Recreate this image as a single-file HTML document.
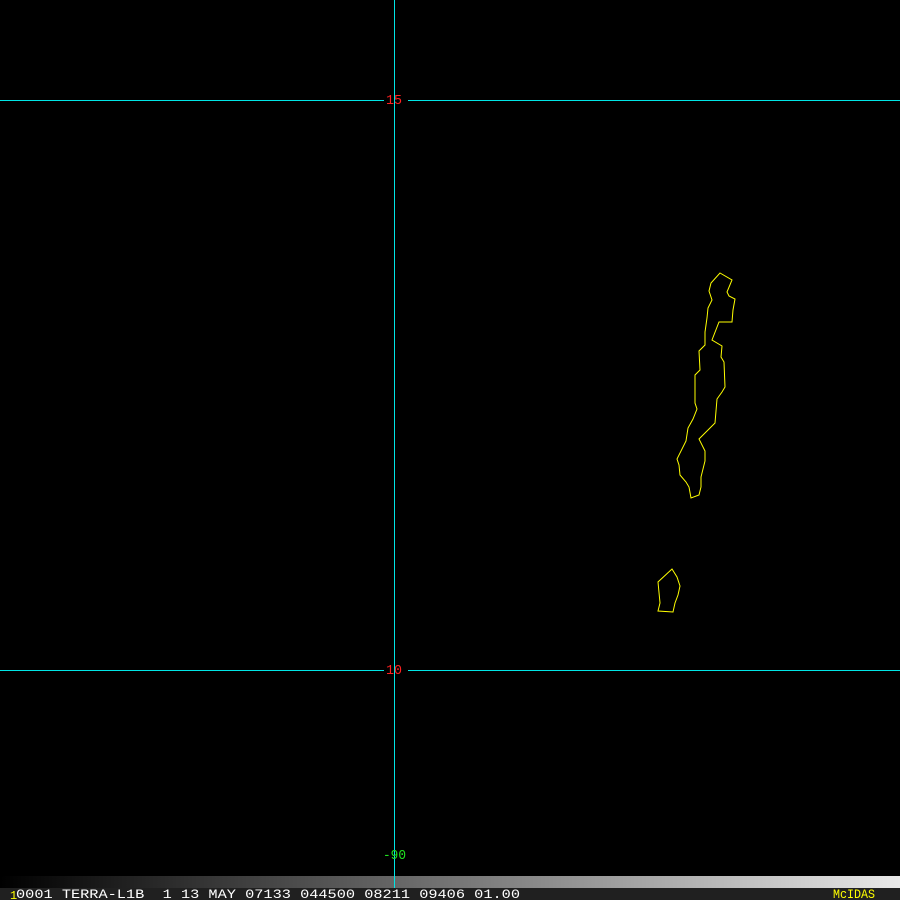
<!DOCTYPE html>
<html><head><style>
html,body{margin:0;padding:0;background:#000;width:900px;height:900px;overflow:hidden}
</style></head><body>
<svg width="900" height="900" viewBox="0 0 900 900" xmlns="http://www.w3.org/2000/svg" style="display:block">
<defs><linearGradient id="g" x1="0" x2="1" y1="0" y2="0"><stop offset="0" stop-color="#000"/><stop offset="1" stop-color="#e8e8e8"/></linearGradient></defs>
<rect width="900" height="900" fill="#000"/>
<rect x="0" y="876" width="900" height="12" fill="url(#g)"/>
<rect x="0" y="888" width="900" height="12" fill="#202020"/>
<g stroke="#00e5e5" stroke-width="1" shape-rendering="crispEdges">
<line x1="394.5" y1="0" x2="394.5" y2="888"/>
<line x1="0" y1="100.5" x2="384" y2="100.5"/>
<line x1="408" y1="100.5" x2="900" y2="100.5"/>
<line x1="0" y1="670.5" x2="384" y2="670.5"/>
<line x1="408" y1="670.5" x2="900" y2="670.5"/>
</g>
<g font-family="Liberation Mono, monospace" font-size="14">
<text x="386" y="104" fill="#ff2020" textLength="16" lengthAdjust="spacingAndGlyphs">15</text>
<text x="386" y="674" fill="#ff2020" textLength="16" lengthAdjust="spacingAndGlyphs">10</text>
<text x="383" y="859" fill="#20e020" textLength="23" lengthAdjust="spacingAndGlyphs">-90</text>
</g>
<g font-family="Liberation Mono, monospace" font-size="13">
<text x="10" y="899" fill="#ffff00" font-size="12">1</text>
<text x="16" y="898" fill="#ffffff" xml:space="preserve" textLength="504" lengthAdjust="spacingAndGlyphs">0001 TERRA-L1B  1 13 MAY 07133 044500 08211 09406 01.00</text>
<text x="833" y="898" fill="#ffff00" textLength="42" lengthAdjust="spacingAndGlyphs">McIDAS</text>
</g>
<g fill="none" stroke="#ffff00" stroke-width="1">
<polygon points="720,273 732,280 727,292 729,296 735,299 733,310 732,322 719,322 712,340 722,346 721,357 724,362 725,387 722,392 717,399 715,423 699,439 705,451 705,461 701,477 701,487 699,495 691,498 689,487 686,482 680,475 679,465 677,459 686,441 688,428 693,419 697,409 695,403 695,375 700,370 699,351 705,345 705,332 707,318 708,308 712,300 709,291 711,283"/>
<polygon points="672,569 677,577 680,586 678,595 675,603 673,612 658,611 660,603 658,582"/>
</g>
</svg>
</body></html>
